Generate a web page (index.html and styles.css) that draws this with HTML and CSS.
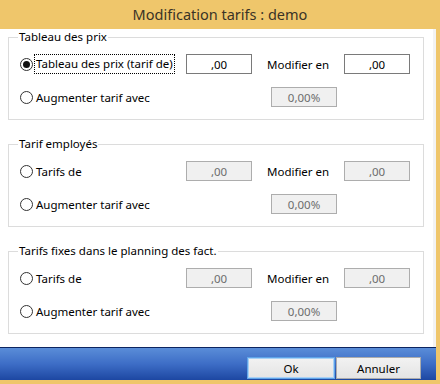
FILE: index.html
```html
<!DOCTYPE html>
<html>
<head>
    <title>Modification tarifs : demo</title>
    <link rel="stylesheet" href="styles.css">
</head>
<body>

<div class="window">

<div class="titlebar">Modification tarifs : demo</div>

<div class="client">

<fieldset class="group">
<legend>Tableau des prix</legend>
<div class="row">
    <label class="opt"><span class="radio checked"></span><span class="focus">Tableau des prix (tarif de)</span></label>
    <input class="num" value=",00" readonly>
    <span class="lbl">Modifier en</span>
    <input class="num" value=",00" readonly>
</div>
<div class="row second">
    <label class="opt wide"><span class="radio"></span>Augmenter tarif avec</label>
    <input class="num off" value="0,00%" readonly>
</div>
</fieldset>

<fieldset class="group">
<legend>Tarif employés</legend>
<div class="row">
    <label class="opt"><span class="radio"></span>Tarifs de</label>
    <input class="num off" value=",00" readonly>
    <span class="lbl">Modifier en</span>
    <input class="num off" value=",00" readonly>
</div>
<div class="row second">
    <label class="opt wide"><span class="radio"></span>Augmenter tarif avec</label>
    <input class="num off" value="0,00%" readonly>
</div>
</fieldset>

<fieldset class="group">
<legend>Tarifs fixes dans le planning des fact.</legend>
<div class="row">
    <label class="opt"><span class="radio"></span>Tarifs de</label>
    <input class="num off" value=",00" readonly>
    <span class="lbl">Modifier en</span>
    <input class="num off" value=",00" readonly>
</div>
<div class="row second">
    <label class="opt wide"><span class="radio"></span>Augmenter tarif avec</label>
    <input class="num off" value="0,00%" readonly>
</div>
</fieldset>

</div>

<div class="footer">
    <button class="btn default">Ok</button>
    <button class="btn">Annuler</button>
</div>

</div>

</body>
</html>
```

FILE: styles.css
```css
body{
    margin: 0;
    font-family: "Noto Sans", "Open Sans", sans-serif;
    font-size: 11.5px;
    color: #000;
}

.window{
    width: 440px;
    height: 384px;
    background-color: #efc66b;
    display: flex;
    flex-direction: column;
}

.titlebar{
    height: 29px;
    line-height: 28px;
    text-align: center;
    font-size: 14.5px;
    color: #3a3326;
}

.client{
    width: 436px;
    height: 318px;
    box-sizing: border-box;
    background-color: white;
    padding: 0 9px 0 8px;
    border-right: 3px solid #f3f3f3;
}

.group{
    margin: 0 0 16px 0;
    padding: 9px 10px 12px 11px;
    border: 1px solid #dcdcdc;
}

.group legend{
    padding: 0 1px;
    margin-left: -2px;
    line-height: 16px;
}

.row{
    display: flex;
    align-items: center;
    height: 20px;
}

.second{
    margin-top: 13px;
}

.opt{
    display: flex;
    align-items: center;
    width: 166px;
    white-space: nowrap;
}

.wide{
    width: 251px;
}

.radio{
    width: 11px;
    height: 11px;
    border: 1px solid #333;
    border-radius: 50%;
    background-color: white;
    margin-right: 3px;
    position: relative;
    flex-shrink: 0;
}

.radio.checked{
    margin-right: 1px;
}

.radio.checked::after{
    content: "";
    position: absolute;
    left: 2px;
    top: 2px;
    width: 7px;
    height: 7px;
    border-radius: 50%;
    background-color: #111;
}

.focus{
    border: 1px dotted #000;
    padding: 0 1px;
    line-height: 18px;
}

.num{
    width: 66px;
    height: 20px;
    box-sizing: border-box;
    border: 1px solid #7a7a7a;
    background-color: white;
    font-family: "Noto Sans", "Open Sans", sans-serif;
    font-size: 11.5px;
    color: #000;
    text-align: center;
    padding: 0;
    margin: 0;
    outline: none;
}

.num.off{
    background-color: #f0f0f0;
    border-color: #adadad;
    color: #6d6d6d;
}

.lbl{
    width: 77px;
    margin-left: 15px;
    white-space: nowrap;
}

.footer{
    width: 436px;
    height: 33px;
    box-sizing: border-box;
    border-top: 1px solid #0c2560;
    background: linear-gradient(#5a8dd8, #3d6dc6 50%, #1d47a2);
    display: flex;
    justify-content: flex-end;
    align-items: flex-end;
    padding: 0 15px 1px 0;
}

.btn{
    height: 22px;
    width: 85px;
    margin: 0;
    padding: 0;
    border: 1px solid #acacac;
    background: linear-gradient(#f2f2f2, #e4e4e4);
    font-family: "Noto Sans", "Open Sans", sans-serif;
    font-size: 11.5px;
    color: #000;
}

.btn.default{
    width: 88px;
    margin-right: 1px;
    border-color: #5fa4e8;
    box-shadow: inset 0 0 0 1px #a9d0f5;
}
```
